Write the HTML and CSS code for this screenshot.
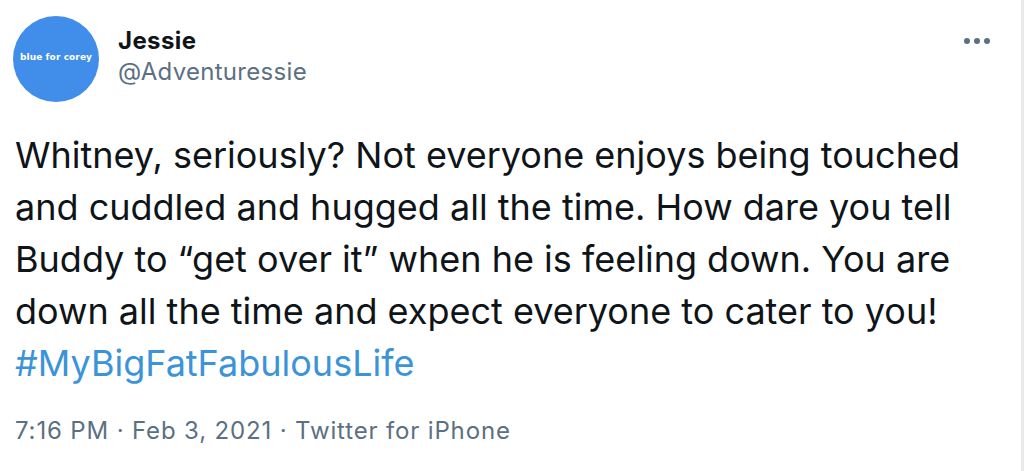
FILE: index.html
```html
<!DOCTYPE html>
<html>
<head>
<meta charset="utf-8">
<link rel="stylesheet" href="styles.css">
</head>
<body>
<div class="page">
  <article class="tweet">
    <header class="tweet-head">
      <div class="avatar"><span class="avatar-text">blue for corey</span></div>
      <div class="who">
        <div class="name">Jessie</div>
        <div class="handle">@Adventuressie</div>
      </div>
      <div class="more"><span class="dot"></span><span class="dot"></span><span class="dot"></span></div>
    </header>
    <p class="text">Whitney, seriously? Not everyone enjoys being touched and cuddled and hugged all the time. How dare you tell Buddy to “get over it” when he is feeling down. You are down all the time and expect everyone to cater to you! <a class="tag">#MyBigFatFabulousLife</a></p>
    <div class="meta">7:16 PM · Feb 3, 2021 · Twitter for iPhone</div>
  </article>
  <div class="edge"></div>
</div>
</body>
</html>
```
FILE: styles.css
```css
html, body {
  margin: 0;
  padding: 0;
  background: #ffffff;
}
.page {
  display: flex;
  width: 1024px;
  height: 471px;
  overflow: hidden;
}
.tweet {
  flex: 1;
  padding: 16px 0 0 15px;
  font-family: Inter, "Liberation Sans", sans-serif;
  color: #0f1419;
}
.edge {
  width: 3px;
  background: #e9e9ea;
}
.tweet-head {
  display: flex;
  align-items: flex-start;
}
.avatar {
  width: 86px;
  height: 86px;
  border-radius: 50%;
  background: #418eea;
  display: flex;
  align-items: center;
  justify-content: center;
  margin-left: -2px;
}
.avatar-text {
  color: #ffffff;
  font-family: "DejaVu Sans", sans-serif;
  font-size: 9px;
  font-weight: bold;
  letter-spacing: 0.1px;
  margin-top: -4px;
}
.who {
  margin-left: 19px;
  padding-top: 10px;
}
.name {
  font-weight: 700;
  font-size: 24px;
  line-height: 29px;
  letter-spacing: 0.4px;
  color: #0f1419;
}
.handle {
  font-size: 24px;
  line-height: 34px;
  letter-spacing: 0.3px;
  color: #5b7083;
}
.more {
  margin-left: auto;
  margin-right: 31px;
  margin-top: 22px;
  display: flex;
  gap: 4px;
}
.dot {
  width: 6px;
  height: 6px;
  border-radius: 50%;
  background: #5b7083;
}
.text {
  margin: 27px 0 0 0;
  font-size: 36px;
  line-height: 52px;
  width: 980px;
}
.tag {
  color: #3b94d9;
}
.meta {
  margin-top: 27px;
  font-size: 24px;
  line-height: 29px;
  letter-spacing: 0.85px;
  color: #5b7083;
}
```
